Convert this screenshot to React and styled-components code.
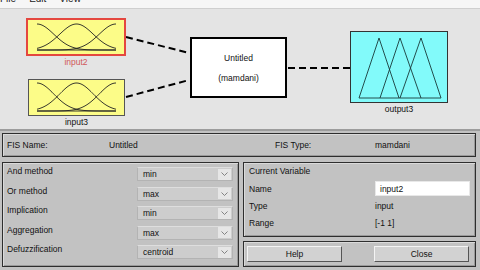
import React from 'react'
import styled, { createGlobalStyle } from 'styled-components'

const GlobalStyle = createGlobalStyle`
  html, body {
    margin: 0;
    padding: 0;
    background: #c2c2c2;
  }
  body {
    font-family: 'Liberation Sans', Arial, sans-serif;
    font-size: 8.5px;
    color: #111;
  }
`

const Window = styled.div`
  width: 480px;
  height: 270px;
  display: flex;
  flex-direction: column;
  overflow: hidden;
  background: #c2c2c2;
`

const MenuBar = styled.div`
  height: 8px;
  background: #f6f6f6;
  border-bottom: 1px solid #cfcfcf;
  display: flex;
  gap: 13px;
  overflow: hidden;
`

const MenuItem = styled.span`
  font-size: 10px;
  line-height: 10px;
  margin-top: -6px;
  color: #222;
`

const Diagram = styled.div`
  position: relative;
  height: 120px;
  background: #e4e4e4;
  border-bottom: 2px solid #9c9c9c;
  flex-shrink: 0;
`

const Wires = styled.svg`
  position: absolute;
  left: 0;
  top: 0;
`

const Node = styled.div`
  position: absolute;
  left: ${p => p.$x}px;
  top: ${p => p.$y}px;
  display: flex;
  flex-direction: column;
  align-items: center;
  gap: ${p => p.$gap || 2}px;
`

const VarBox = styled.div`
  width: ${p => p.$w}px;
  height: ${p => p.$h}px;
  box-sizing: border-box;
  background: ${p => p.$fill};
  border: ${p => p.$border};
  display: flex;
  align-items: center;
  justify-content: center;
`

const NodeLabel = styled.div`
  font-size: 8.5px;
  line-height: 10px;
  color: ${p => p.$color || '#111'};
`

const RuleBox = styled.div`
  width: 97px;
  height: 61px;
  box-sizing: border-box;
  background: #fff;
  border: 2px solid #000;
  display: flex;
  flex-direction: column;
  align-items: center;
  justify-content: center;
  gap: 10px;
  font-size: 8.5px;
  line-height: 10px;
`

const Controls = styled.div`
  flex: 1;
  padding: 2px 4px 0 2px;
  display: flex;
  flex-direction: column;
  gap: 5px;
`

const Panel = styled.div`
  box-sizing: border-box;
  border: 1px solid #2e2e2e;
  box-shadow: inset 1px 1px 0 #dadada, inset -1px -1px 0 #9a9a9a;
  background: #c2c2c2;
`

const FisRow = styled(Panel)`
  height: 24px;
  display: grid;
  grid-template-columns: 102px 166px 100px 1fr;
  align-items: center;
  padding: 0 0 1px 4px;
`

const Columns = styled.div`
  display: grid;
  grid-template-columns: 237px 233px;
  gap: 4px;
`

const MethodPanel = styled(Panel)`
  height: 105px;
  display: grid;
  grid-template-columns: 130px 96px;
  grid-auto-rows: 14px;
  row-gap: 5.5px;
  padding: 4px 0 0 4px;
`

const Label = styled.div`
  line-height: 10px;
  align-self: ${p => (p.$lift ? 'start' : 'center')};
  margin-top: ${p => (p.$lift ? -1 : 0)}px;
`

const Select = styled.div`
  box-sizing: border-box;
  height: 14px;
  background: #cdcdcd;
  border: 1px solid #b3b3b3;
  border-top-color: #dedede;
  display: flex;
  align-items: center;
  justify-content: space-between;
  padding: 0 1px 0 5px;
  line-height: 10px;
`

const Chevron = styled.div`
  width: 13px;
  height: 11px;
  background: #e6e6e6;
  display: flex;
  align-items: center;
  justify-content: center;
`

const RightColumn = styled.div`
  display: flex;
  flex-direction: column;
  gap: 4px;
`

const VarPanel = styled(Panel)`
  height: 75px;
  display: grid;
  grid-template-columns: 126px 95px;
  grid-template-rows: 14px 17px 17px 17px;
  align-items: center;
  padding: 3px 0 0 5px;
`

const Title = styled.div`
  grid-column: 1 / 3;
  align-self: start;
  line-height: 10px;
`

const NameInput = styled.div`
  box-sizing: border-box;
  height: 15px;
  background: #fff;
  border: 1px solid #e8e8e8;
  padding-left: 4px;
  display: flex;
  align-items: center;
  line-height: 10px;
`

const ButtonPanel = styled(Panel)`
  height: 26px;
  display: flex;
  align-items: center;
  gap: 32px;
  padding: 0 0 1px 3px;
`

const Button = styled.div`
  box-sizing: border-box;
  width: 95px;
  height: 16px;
  background: #d2d2d2;
  border: 1px solid;
  border-color: #f4f4f4 #555 #555 #f4f4f4;
  display: flex;
  align-items: center;
  justify-content: center;
  line-height: 10px;
`

const Gaussians = ({ w, h }) => {
  const base = h - 4
  const top = 3
  const x0 = 8
  const x1 = w - 8
  const c = [x0, (x0 + x1) / 2, x1]
  const s = (x1 - x0) / 4.7
  const curve = mu => {
    const pts = []
    for (let x = x0; x <= x1; x += 1) {
      const y = base - (base - top) * Math.exp(-((x - mu) ** 2) / (2 * s * s))
      pts.push(`${x},${y.toFixed(2)}`)
    }
    return pts.join(' ')
  }
  return (
    <svg width={w} height={h}>
      {c.map(mu => (
        <polyline key={mu} points={curve(mu)} fill="none" stroke="#222" strokeWidth="0.9" />
      ))}
      <line x1={x0} y1={base} x2={x1} y2={base} stroke="#222" strokeWidth="0.9" />
    </svg>
  )
}

const Triangles = () => (
  <svg width="96" height="70">
    <g fill="none" stroke="#1a3a3a" strokeWidth="0.9">
      <polyline points="8,66 28,6 48,66" />
      <polyline points="29,66 49,6 70,66" />
      <polyline points="49,66 70,6 90,66" />
      <line x1="8" y1="66" x2="90" y2="66" />
    </g>
  </svg>
)

const ChevronIcon = () => (
  <svg width="7" height="4" viewBox="0 0 7 4">
    <polyline points="0.5,0.5 3.5,3.5 6.5,0.5" fill="none" stroke="#777" strokeWidth="0.9" />
  </svg>
)

const methods = [
  ['And method', 'min'],
  ['Or method', 'max'],
  ['Implication', 'min'],
  ['Aggregation', 'max'],
  ['Defuzzification', 'centroid'],
]

const App = () => (
  <Window>
    <GlobalStyle />
    <MenuBar>
      <MenuItem>File</MenuItem>
      <MenuItem>Edit</MenuItem>
      <MenuItem>View</MenuItem>
    </MenuBar>
    <Diagram>
      <Wires width="480" height="120">
        <g stroke="#000" strokeWidth="2" strokeDasharray="7 4" fill="none">
          <line x1="126" y1="28" x2="189" y2="44" />
          <line x1="126" y1="88" x2="189" y2="71" />
          <line x1="288" y1="59" x2="350" y2="59" />
        </g>
      </Wires>
      <Node $x={26} $y={9} $gap={1}>
        <VarBox $w={100} $h={38} $fill="#fcfc88" $border="2.5px solid #e4473f">
          <Gaussians w={95} h={33} />
        </VarBox>
        <NodeLabel $color="#d0585a">input2</NodeLabel>
      </Node>
      <Node $x={28} $y={70} $gap={1}>
        <VarBox $w={97} $h={37} $fill="#fcfc88" $border="1px solid #555">
          <Gaussians w={95} h={35} />
        </VarBox>
        <NodeLabel>input3</NodeLabel>
      </Node>
      <Node $x={190} $y={28}>
        <RuleBox>
          <span>Untitled</span>
          <span>(mamdani)</span>
        </RuleBox>
      </Node>
      <Node $x={350} $y={22} $gap={1}>
        <VarBox $w={98} $h={72} $fill="#82fafa" $border="1px solid #333">
          <Triangles />
        </VarBox>
        <NodeLabel>output3</NodeLabel>
      </Node>
    </Diagram>
    <Controls>
      <FisRow>
        <span>FIS Name:</span>
        <span>Untitled</span>
        <span>FIS Type:</span>
        <span>mamdani</span>
      </FisRow>
      <Columns>
        <MethodPanel>
          {methods.map(([label, value]) => (
            <React.Fragment key={label}>
              <Label $lift>{label}</Label>
              <Select>
                <span>{value}</span>
                <Chevron>
                  <ChevronIcon />
                </Chevron>
              </Select>
            </React.Fragment>
          ))}
        </MethodPanel>
        <RightColumn>
          <VarPanel>
            <Title>Current Variable</Title>
            <Label>Name</Label>
            <NameInput>input2</NameInput>
            <Label>Type</Label>
            <Label>input</Label>
            <Label>Range</Label>
            <Label>[-1 1]</Label>
          </VarPanel>
          <ButtonPanel>
            <Button>Help</Button>
            <Button>Close</Button>
          </ButtonPanel>
        </RightColumn>
      </Columns>
    </Controls>
  </Window>
)

export default App
